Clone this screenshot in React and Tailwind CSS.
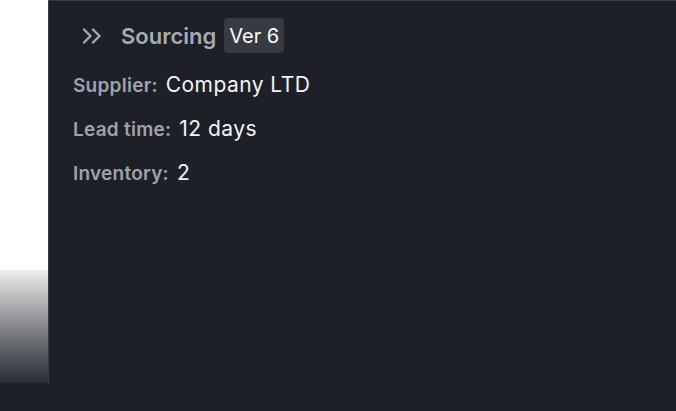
const rows = [
  { label: 'Supplier:', value: 'Company LTD' },
  { label: 'Lead time:', value: '12 days' },
  { label: 'Inventory:', value: '2' },
];

function Chevrons() {
  return (
    <svg width="20" height="16" viewBox="0 0 20 16" fill="none" stroke="currentColor" strokeWidth="2.4" strokeLinecap="round" strokeLinejoin="round">
      <polyline points="2,1.5 8.5,8 2,14.5" />
      <polyline points="11,1.5 17.5,8 11,14.5" />
    </svg>
  );
}

export default function App() {
  return (
    <div className="h-[411px] w-[676px] overflow-hidden bg-[#1d2027] flex" style={{ fontFamily: 'Inter, "Noto Sans", sans-serif' }}>
      {/* Left backdrop */}
      <div className="w-[48px] flex flex-col shrink-0">
        <div className="h-[270px] bg-white" />
        <div className="h-[113px] bg-gradient-to-b from-[#eeeeee] via-[#85878b] to-[#2a2d33]" />
        <div className="flex-1" />
      </div>

      {/* Panel */}
      <div className="flex-1 border-l border-t border-[#3a3e45] bg-[#1d2027] h-[383px]">
        <div className="flex items-center pl-[33px] pt-[17px] h-[52px]">
          <span className="text-[#a3a7af]"><Chevrons /></span>
          <span className="ml-[19px] text-[22px] leading-[28px] font-semibold text-[#a7abb3]">Sourcing</span>
          <span className="ml-[8px] rounded-[4px] bg-[#363a41] w-[60px] h-[35px] flex items-center justify-center text-[20px] text-white">Ver 6</span>
        </div>
        <div className="mt-[18px] pl-[24px] flex flex-col gap-[16px]">
          {rows.map((r) => (
            <div key={r.label} className="flex items-baseline h-[28px]">
              <span className="text-[19px] leading-[28px] font-semibold tracking-[0.25px] text-[#9ea3ab]">{r.label}</span>
              <span className="ml-[8px] text-[21px] leading-[28px] tracking-[0.45px] text-[#f3f4f6]">{r.value}</span>
            </div>
          ))}
        </div>
      </div>
    </div>
  );
}
